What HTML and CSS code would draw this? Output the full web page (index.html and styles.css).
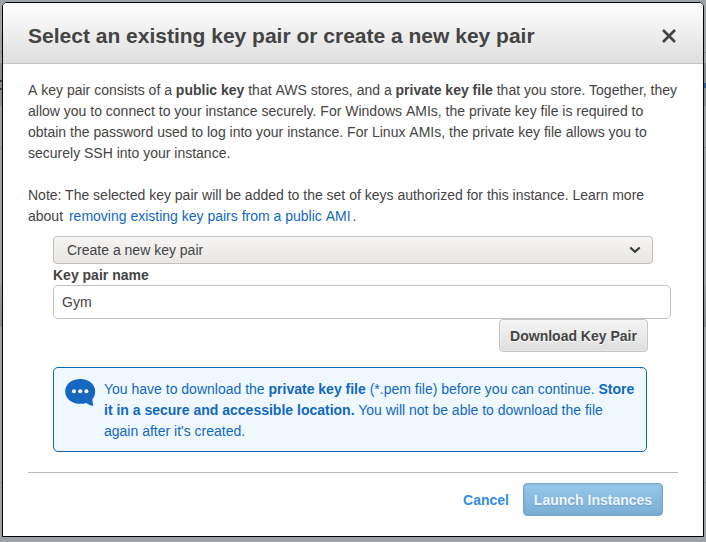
FILE: index.html
```html
<!DOCTYPE html>
<html lang="en">
<head>
<meta charset="utf-8">
<title>Select a key pair</title>
<link rel="stylesheet" href="styles.css">
</head>
<body>
<div class="modal">
  <header class="modal-header">
    <h1>Select an existing key pair or create a new key pair</h1>
    <svg class="close" width="14" height="14" viewBox="0 0 14 14"><path d="M1 1L13 13M13 1L1 13" fill="none" stroke="#444" stroke-width="2.7"/></svg>
  </header>
  <main class="modal-body">
    <p>A<span class="sp"> </span>key pair consists of a <b>public key</b> that<span class="sp"> </span>AWS stores, and a <b>private key file</b> that you store. Together, they<br>allow you to connect to your instance securely. For Windows<span class="sp"> </span>AMIs, the private key file is required to<br>obtain the password used to log into your instance. For Linux<span class="sp"> </span>AMIs, the private key file allows you to<br>securely SSH into your instance.</p>
    <p>Note: The selected key pair will be added to the set of keys authorized for this instance. Learn more<br>about <a class="learn" href="#">removing existing key pairs from a public<span class="sp"> </span>AMI</a>.</p>
    <div class="form">
      <div class="select">
        <span>Create a new key pair</span>
        <svg width="12" height="8" viewBox="0 0 12 8"><path d="M1.3 1.5L6 5.7L10.7 1.5" fill="none" stroke="#3a3a3a" stroke-width="2.2"/></svg>
      </div>
      <div class="label">Key pair name</div>
      <div class="input">Gym</div>
      <div class="download-row"><button class="download">Download Key Pair</button></div>
      <div class="notice">
        <svg width="31" height="28" viewBox="0 0 31 28">
          <path d="M15.2 0C6.8 0 .2 5.200 .2 12.400C.2 19.600 6.800 24.800 15.200 24.800C17.500 24.800 19.500 24.500 21.300 23.900C23.300 25.400 25.500 26.400 28.200 26.900L27.300 20.200C29.200 18.200 30.200 15.500 30.200 12.400C30.200 5.200 23.600 0 15.200 0Z" fill="#1766c0"/>
          <g fill="#fff"><circle cx="9" cy="12.300" r="2"/><circle cx="15.200" cy="12.300" r="2"/><circle cx="21.400" cy="12.300" r="2"/></g>
        </svg>
        <div>You have to download the <b>private key file</b> (*.pem file) before you can continue. <b>Store<br>it in a secure and accessible location.</b> You will not be able to download the file<br>again after it's created.</div>
      </div>
    </div>
  </main>
  <footer class="modal-footer">
    <a class="cancel" href="#">Cancel</a>
    <button class="launch">Launch Instances</button>
  </footer>
</div>
</body>
</html>
```
FILE: styles.css
```css
* { box-sizing: border-box; }
body {
  margin: 0;
  height: 542px;
  padding: 2px;
  overflow: hidden;
  background:
    linear-gradient(#3c4045, #3c4045) 0 80px / 2px 2px no-repeat,
    linear-gradient(#3c4045, #3c4045) 0 88px / 2px 2px no-repeat,
    linear-gradient(#2f5f9e, #2f5f9e) 100% 83px / 2px 5px no-repeat,
    linear-gradient(#858c92, #858c92) 0 52px / 100% 1px no-repeat,
    linear-gradient(#858c92, #858c92) 0 147px / 100% 1px no-repeat,
    linear-gradient(#858b90, #8b9196) 0 63px / 100% 43px no-repeat,
    linear-gradient(#949ba1, #858b91) 0 285px / 100% 42px no-repeat,
    linear-gradient(#8b9298, #8b9298) 0 482px / 100% 1px no-repeat,
    #9ba3a9;
  font: 14px/21px "Liberation Sans", Arial, sans-serif;
  color: #444;
}
.modal {
  width: 702px;
  height: 535px;
  border: 1px solid #000;
  border-radius: 5px 5px 0 0;
  background: #fff;
  overflow: hidden;
}
.modal-header {
  display: flex;
  align-items: center;
  justify-content: space-between;
  height: 61px;
  padding: 6px 27px 0 25px;
  border-bottom: 1px solid #c4c4c4;
  background: linear-gradient(#fff, #dedede);
}
h1 { margin: 0; font-size: 21px; line-height: 26px; }
.modal-body { padding: 16px 25px 0; white-space: nowrap; }
p { margin: 0 0 21px; }
p + p { margin-bottom: 9px; }
a { text-decoration: none; }
/* keeps the full width of a space next to a capital A */
.sp { font-kerning: none; }
.learn { padding: 0 2px; color: #1168c0; }
.form { padding: 0 25px; }
.select {
  display: flex;
  align-items: center;
  justify-content: space-between;
  height: 28px;
  padding: 0 11px 0 13px;
  border: 1px solid #c3beb9;
  border-radius: 4px;
  background: linear-gradient(#f6f5f4, #e9e7e5);
}
.label { height: 21px; padding-top: 1px; font-weight: bold; }
.input {
  width: 618px;
  height: 34px;
  padding: 6px 8px;
  border: 1px solid #c5c0bb;
  border-radius: 5px;
}
.download-row { display: flex; justify-content: flex-end; padding-right: 5px; }
button { padding: 2px 0 0; font: bold 14px/21px "Liberation Sans", Arial, sans-serif; border-radius: 4px; }
.download {
  width: 149px;
  height: 33px;
  color: #444;
  border: 1px solid #c5c5c5;
  background: linear-gradient(#f5f5f5, #dedede);
  box-shadow: inset 0 0 2px #fff;
  text-shadow: 0 1px 0 #fff;
}
.notice {
  display: flex;
  gap: 8px;
  width: 594px;
  height: 85px;
  margin-top: 15px;
  padding: 11px 0 0 11px;
  border: 1px solid #0a67b5;
  border-radius: 5px;
  background: #f0f8ff;
  color: #1168c0;
}
.modal-footer {
  display: flex;
  align-items: flex-start;
  justify-content: flex-end;
  gap: 14px;
  height: 55px;
  margin: 20px 25px 0;
  padding: 10px 15px 0 0;
  border-top: 1px solid #b8b8b8;
}
.cancel { padding-top: 7px; font-weight: bold; color: #348ce0; }
.launch {
  width: 140px;
  height: 33px;
  border: 1px solid #75a9cf;
  color: #edf5fb;
  background: linear-gradient(#98c9ed, #79add2);
  box-shadow: inset 0 0 3px #75a9cf;
  text-shadow: 0 1px 1px #6b9dc2;
}
```
